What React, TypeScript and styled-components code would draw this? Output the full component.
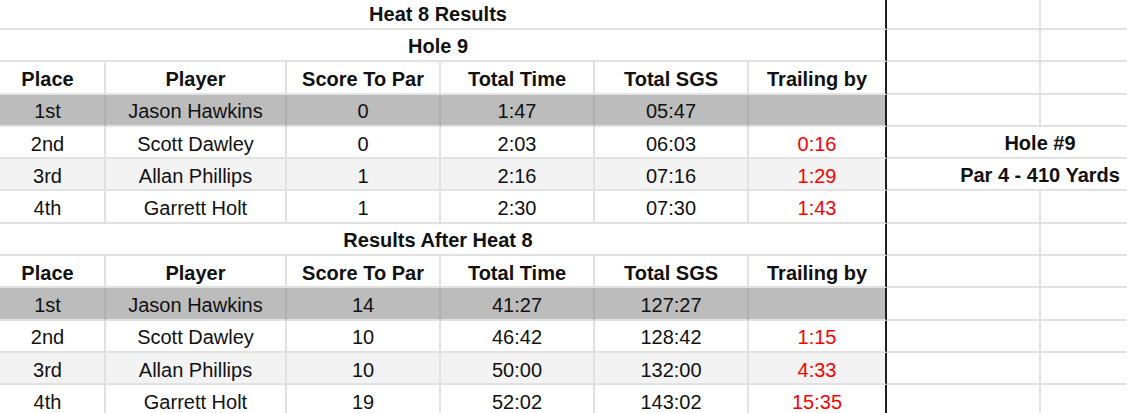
import React from "react";
import styled, { createGlobalStyle } from "styled-components";

const Global = createGlobalStyle`
  html, body {
    margin: 0;
    padding: 0;
    background: #ffffff;
    overflow: hidden;
  }
  body {
    font-family: "Liberation Sans", Arial, sans-serif;
  }
`;

const COLS = "115px 181px 154px 154px 154px 138px 154px 154px";
const GRID = "#e2e2e2";

const Viewport = styled.div`
  width: 100vw;
  height: 100vh;
  overflow: hidden;
`;

const Sheet = styled.div`
  display: flex;
  flex-direction: column;
  margin: -2.3px 0 0 -9px;
  width: 1204px;
  font-family: "Liberation Sans", Arial, sans-serif;
  font-size: 20px;
  color: #111111;
`;

const Row = styled.div`
  display: grid;
  grid-template-columns: ${COLS};
  height: 32.3px;
`;

type Tone = "white" | "dark" | "light";

const bgOf = (t?: Tone) => (t === "dark" ? "#bcbcbc" : t === "light" ? "#f3f3f3" : "#ffffff");

const Cell = styled.div<{
  $span?: number;
  $tone?: Tone;
  $bold?: boolean;
  $red?: boolean;
  $edge?: boolean;
  $title?: boolean;
}>`
  grid-column: span ${(p) => p.$span ?? 1};
  box-sizing: border-box;
  display: flex;
  align-items: flex-end;
  justify-content: center;
  padding-bottom: ${(p) => (p.$title ? "3px" : "2.5px")};
  line-height: 22px;
  white-space: nowrap;
  background: ${(p) => bgOf(p.$tone)};
  font-weight: ${(p) => (p.$bold ? 700 : 400)};
  color: ${(p) => (p.$red ? "#ff0000" : "#111111")};
  border-bottom: 2px solid ${GRID};
  border-right: 2px solid
    ${(p) => (p.$edge ? "#1f1f1f" : p.$tone === "dark" ? "#b0b0b0" : GRID)};
`;

const headers = ["Place", "Player", "Score To Par", "Total Time", "Total SGS", "Trailing by"];

type Entry = { place: string; name: string; par: string; time: string; sgs: string; trail: string };

const heat: Entry[] = [
  { place: "1st", name: "Jason Hawkins", par: "0", time: "1:47", sgs: "05:47", trail: "" },
  { place: "2nd", name: "Scott Dawley", par: "0", time: "2:03", sgs: "06:03", trail: "0:16" },
  { place: "3rd", name: "Allan Phillips", par: "1", time: "2:16", sgs: "07:16", trail: "1:29" },
  { place: "4th", name: "Garrett Holt", par: "1", time: "2:30", sgs: "07:30", trail: "1:43" },
];

const overall: Entry[] = [
  { place: "1st", name: "Jason Hawkins", par: "14", time: "41:27", sgs: "127:27", trail: "" },
  { place: "2nd", name: "Scott Dawley", par: "10", time: "46:42", sgs: "128:42", trail: "1:15" },
  { place: "3rd", name: "Allan Phillips", par: "10", time: "50:00", sgs: "132:00", trail: "4:33" },
  { place: "4th", name: "Garrett Holt", par: "19", time: "52:02", sgs: "143:02", trail: "15:35" },
];

const toneFor = (i: number): Tone => (i === 0 ? "dark" : i === 2 ? "light" : "white");

const EmptyPair = () => (
  <>
    <Cell />
    <Cell />
  </>
);

const TitleRow = ({ text }: { text: string }) => (
  <Row>
    <Cell $span={6} $bold $edge $title>
      {text}
    </Cell>
    <EmptyPair />
  </Row>
);

const HeaderRow = () => (
  <Row>
    {headers.map((h, i) => (
      <Cell key={h} $bold $edge={i === 5}>
        {h}
      </Cell>
    ))}
    <EmptyPair />
  </Row>
);

const DataRow = ({ e, tone, side }: { e: Entry; tone: Tone; side?: string }) => (
  <Row>
    <Cell $tone={tone}>{e.place}</Cell>
    <Cell $tone={tone}>{e.name}</Cell>
    <Cell $tone={tone}>{e.par}</Cell>
    <Cell $tone={tone}>{e.time}</Cell>
    <Cell $tone={tone}>{e.sgs}</Cell>
    <Cell $tone={tone} $red $edge>
      {e.trail}
    </Cell>
    {side ? (
      <Cell $span={2} $bold $title>
        {side}
      </Cell>
    ) : (
      <EmptyPair />
    )}
  </Row>
);

const sideNotes: Record<number, string> = { 1: "Hole #9", 2: "Par 4 - 410 Yards" };

export default function App() {
  return (
    <>
      <Global />
      <Viewport>
        <Sheet>
          <TitleRow text="Heat 8 Results" />
          <TitleRow text="Hole 9" />
          <HeaderRow />
          {heat.map((e, i) => (
            <DataRow key={"h" + i} e={e} tone={toneFor(i)} side={sideNotes[i]} />
          ))}
          <TitleRow text="Results After Heat 8" />
          <HeaderRow />
          {overall.map((e, i) => (
            <DataRow key={"o" + i} e={e} tone={toneFor(i)} />
          ))}
        </Sheet>
      </Viewport>
    </>
  );
}
